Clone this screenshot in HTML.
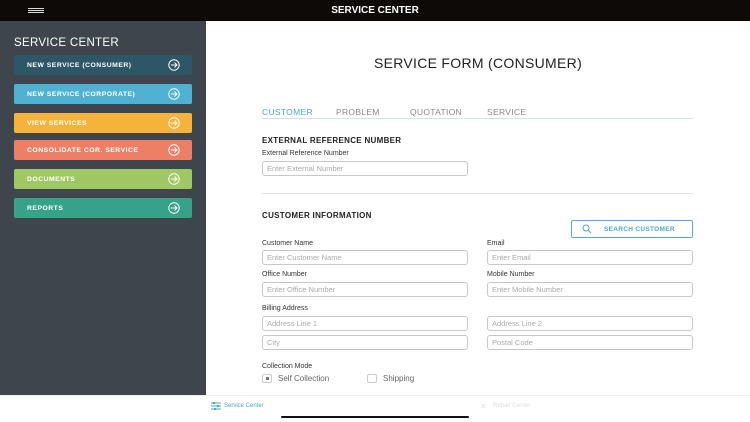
<!DOCTYPE html>
<html><head><meta charset="utf-8"><style>
*{box-sizing:border-box;margin:0;padding:0}
body{width:750px;height:422px;overflow:hidden;background:#fff;font-family:"Liberation Sans",sans-serif;position:relative}
.top{position:absolute;left:0;top:0;width:750px;height:21px;background:#0e0a08;color:#fff;font-weight:bold;font-size:10px;text-align:center;line-height:21px}
.ham{position:absolute;left:28px;width:16px;height:1px;background:#ddd}
.side{position:absolute;left:0;top:21px;width:206px;height:374px;background:#3f454d}
.side h2{position:absolute;left:14px;top:16px;color:#fff;font-size:11.5px;font-weight:normal;letter-spacing:.3px}
.btn{position:absolute;left:14px;width:178px;height:20px;border-radius:2px;color:#fff;font-size:6.8px;font-weight:600;line-height:21px;padding-left:13px;letter-spacing:.5px}
.btn svg{position:absolute;right:12px;top:4px}
.main h1{position:absolute;left:206px;width:544px;top:55px;text-align:center;font-size:14px;font-weight:normal;color:#222;letter-spacing:.3px}
.tab{position:absolute;top:107px;font-size:8.5px;color:#888;letter-spacing:.3px}
.line{position:absolute;left:262px;width:431px;height:1px;background:#dde3e6}
.sec{position:absolute;left:262px;font-size:8px;font-weight:bold;color:#222;letter-spacing:.3px}
.lbl{position:absolute;font-size:7px;color:#333}
.inp{position:absolute;width:206px;height:15px;border:1px solid #c8c8c8;border-radius:3px;font-size:7.5px;color:#aaa;padding-left:4px;line-height:13px}
.bot{position:absolute;left:0;top:395px;width:750px;height:27px;background:#fff;border-top:1px solid #eee}
</style></head><body>
<div class="top"><div class="ham" style="top:8px"></div><div class="ham" style="top:10px"></div><div class="ham" style="top:12px"></div>SERVICE CENTER</div>
<div class="side"><h2>SERVICE CENTER</h2></div>
<div class="btn" style="top:55px;background:#2d5666">NEW SERVICE (CONSUMER)<svg width="12" height="12" viewBox="0 0 12 12"><circle cx="6" cy="6" r="5.2" fill="none" stroke="#fff" stroke-width="1"/><path d="M3 6h6M6.5 3.5L9 6 6.5 8.5" fill="none" stroke="#fff" stroke-width="1"/></svg></div>
<div class="btn" style="top:84px;background:#4fb2d3">NEW SERVICE (CORPORATE)<svg width="12" height="12" viewBox="0 0 12 12"><circle cx="6" cy="6" r="5.2" fill="none" stroke="#fff" stroke-width="1"/><path d="M3 6h6M6.5 3.5L9 6 6.5 8.5" fill="none" stroke="#fff" stroke-width="1"/></svg></div>
<div class="btn" style="top:113px;background:#f5b33c">VIEW SERVICES<svg width="12" height="12" viewBox="0 0 12 12"><circle cx="6" cy="6" r="5.2" fill="none" stroke="#fff" stroke-width="1"/><path d="M3 6h6M6.5 3.5L9 6 6.5 8.5" fill="none" stroke="#fff" stroke-width="1"/></svg></div>
<div class="btn" style="top:140px;background:#ec7f66">CONSOLIDATE COR. SERVICE<svg width="12" height="12" viewBox="0 0 12 12"><circle cx="6" cy="6" r="5.2" fill="none" stroke="#fff" stroke-width="1"/><path d="M3 6h6M6.5 3.5L9 6 6.5 8.5" fill="none" stroke="#fff" stroke-width="1"/></svg></div>
<div class="btn" style="top:169px;background:#9fc864">DOCUMENTS<svg width="12" height="12" viewBox="0 0 12 12"><circle cx="6" cy="6" r="5.2" fill="none" stroke="#fff" stroke-width="1"/><path d="M3 6h6M6.5 3.5L9 6 6.5 8.5" fill="none" stroke="#fff" stroke-width="1"/></svg></div>
<div class="btn" style="top:198px;background:#36a28a">REPORTS<svg width="12" height="12" viewBox="0 0 12 12"><circle cx="6" cy="6" r="5.2" fill="none" stroke="#fff" stroke-width="1"/><path d="M3 6h6M6.5 3.5L9 6 6.5 8.5" fill="none" stroke="#fff" stroke-width="1"/></svg></div>
<div class="main">
<h1>SERVICE FORM (CONSUMER)</h1>
<div class="tab" style="left:262px;color:#4aa8c9">CUSTOMER</div>
<div class="tab" style="left:336px">PROBLEM</div>
<div class="tab" style="left:410px">QUOTATION</div>
<div class="tab" style="left:487px">SERVICE</div>
<div class="line" style="top:118px;background:#cfe3ea"></div>
<div class="sec" style="top:136px">EXTERNAL REFERENCE NUMBER</div>
<div class="lbl" style="left:262px;top:150px">External Reference Number</div>
<div class="inp" style="left:262px;top:161px">Enter External Number</div>
<div class="line" style="top:193px"></div>
<div class="sec" style="top:211px">CUSTOMER INFORMATION</div>
<div style="position:absolute;left:571px;top:220px;width:122px;height:18px;border:1px solid #5aa9c2;border-radius:2px;font-size:6.5px;font-weight:bold;color:#4aa8c9;line-height:17px;padding-left:32px;letter-spacing:.3px">SEARCH CUSTOMER
<svg style="position:absolute;left:10px;top:3px" width="10" height="10" viewBox="0 0 10 10"><circle cx="4" cy="4" r="3" fill="none" stroke="#4aa8c9" stroke-width="1"/><path d="M6.2 6.2L9 9" stroke="#4aa8c9" stroke-width="1"/></svg></div>
<div class="lbl" style="left:262px;top:240px">Customer Name</div>
<div class="lbl" style="left:487px;top:240px">Email</div>
<div class="inp" style="left:262px;top:250px">Enter Customer Name</div>
<div class="inp" style="left:487px;top:250px">Enter Email</div>
<div class="lbl" style="left:262px;top:271px">Office Number</div>
<div class="lbl" style="left:487px;top:271px">Mobile Number</div>
<div class="inp" style="left:262px;top:282px">Enter Office Number</div>
<div class="inp" style="left:487px;top:282px">Enter Mobile Number</div>
<div class="lbl" style="left:262px;top:305px">Billing Address</div>
<div class="inp" style="left:262px;top:316px">Address Line 1</div>
<div class="inp" style="left:487px;top:316px">Address Line 2</div>
<div class="inp" style="left:262px;top:335px">City</div>
<div class="inp" style="left:487px;top:335px">Postal Code</div>
<div class="lbl" style="left:262px;top:363px">Collection Mode</div>
<div style="position:absolute;left:262px;top:374px;width:10px;height:9px;border:1px solid #ccc;border-radius:2px"><div style="margin:2px 2.5px;width:3px;height:3px;background:#777"></div></div>
<div class="lbl" style="left:278px;top:374px;font-size:8px;color:#666">Self Collection</div>
<div style="position:absolute;left:367px;top:374px;width:10px;height:9px;border:1px solid #ccc;border-radius:2px"></div>
<div class="lbl" style="left:383px;top:374px;font-size:8px;color:#666">Shipping</div>
</div>
<div class="bot">
<svg style="position:absolute;left:211px;top:6px" width="10" height="8" viewBox="0 0 10 8"><path d="M0 1h10M0 4h10M0 7h10" stroke="#4aa8c9" stroke-width="1"/><rect x="2" y="0" width="2" height="2" fill="#4aa8c9"/><rect x="6" y="3" width="2" height="2" fill="#4aa8c9"/><rect x="3" y="6" width="2" height="2" fill="#4aa8c9"/></svg>
<div style="position:absolute;left:224px;top:7px;font-size:6px;color:#4aa8c9">Service Center</div>
<div style="position:absolute;left:480px;top:6px;font-size:8px;color:#ddd">✕</div>
<div style="position:absolute;left:493px;top:7px;font-size:6px;color:#ddd">Repair Center</div>
<div style="position:absolute;left:281px;top:20px;width:188px;height:2px;background:#111;border-radius:1px"></div>
</div>
</body></html>
